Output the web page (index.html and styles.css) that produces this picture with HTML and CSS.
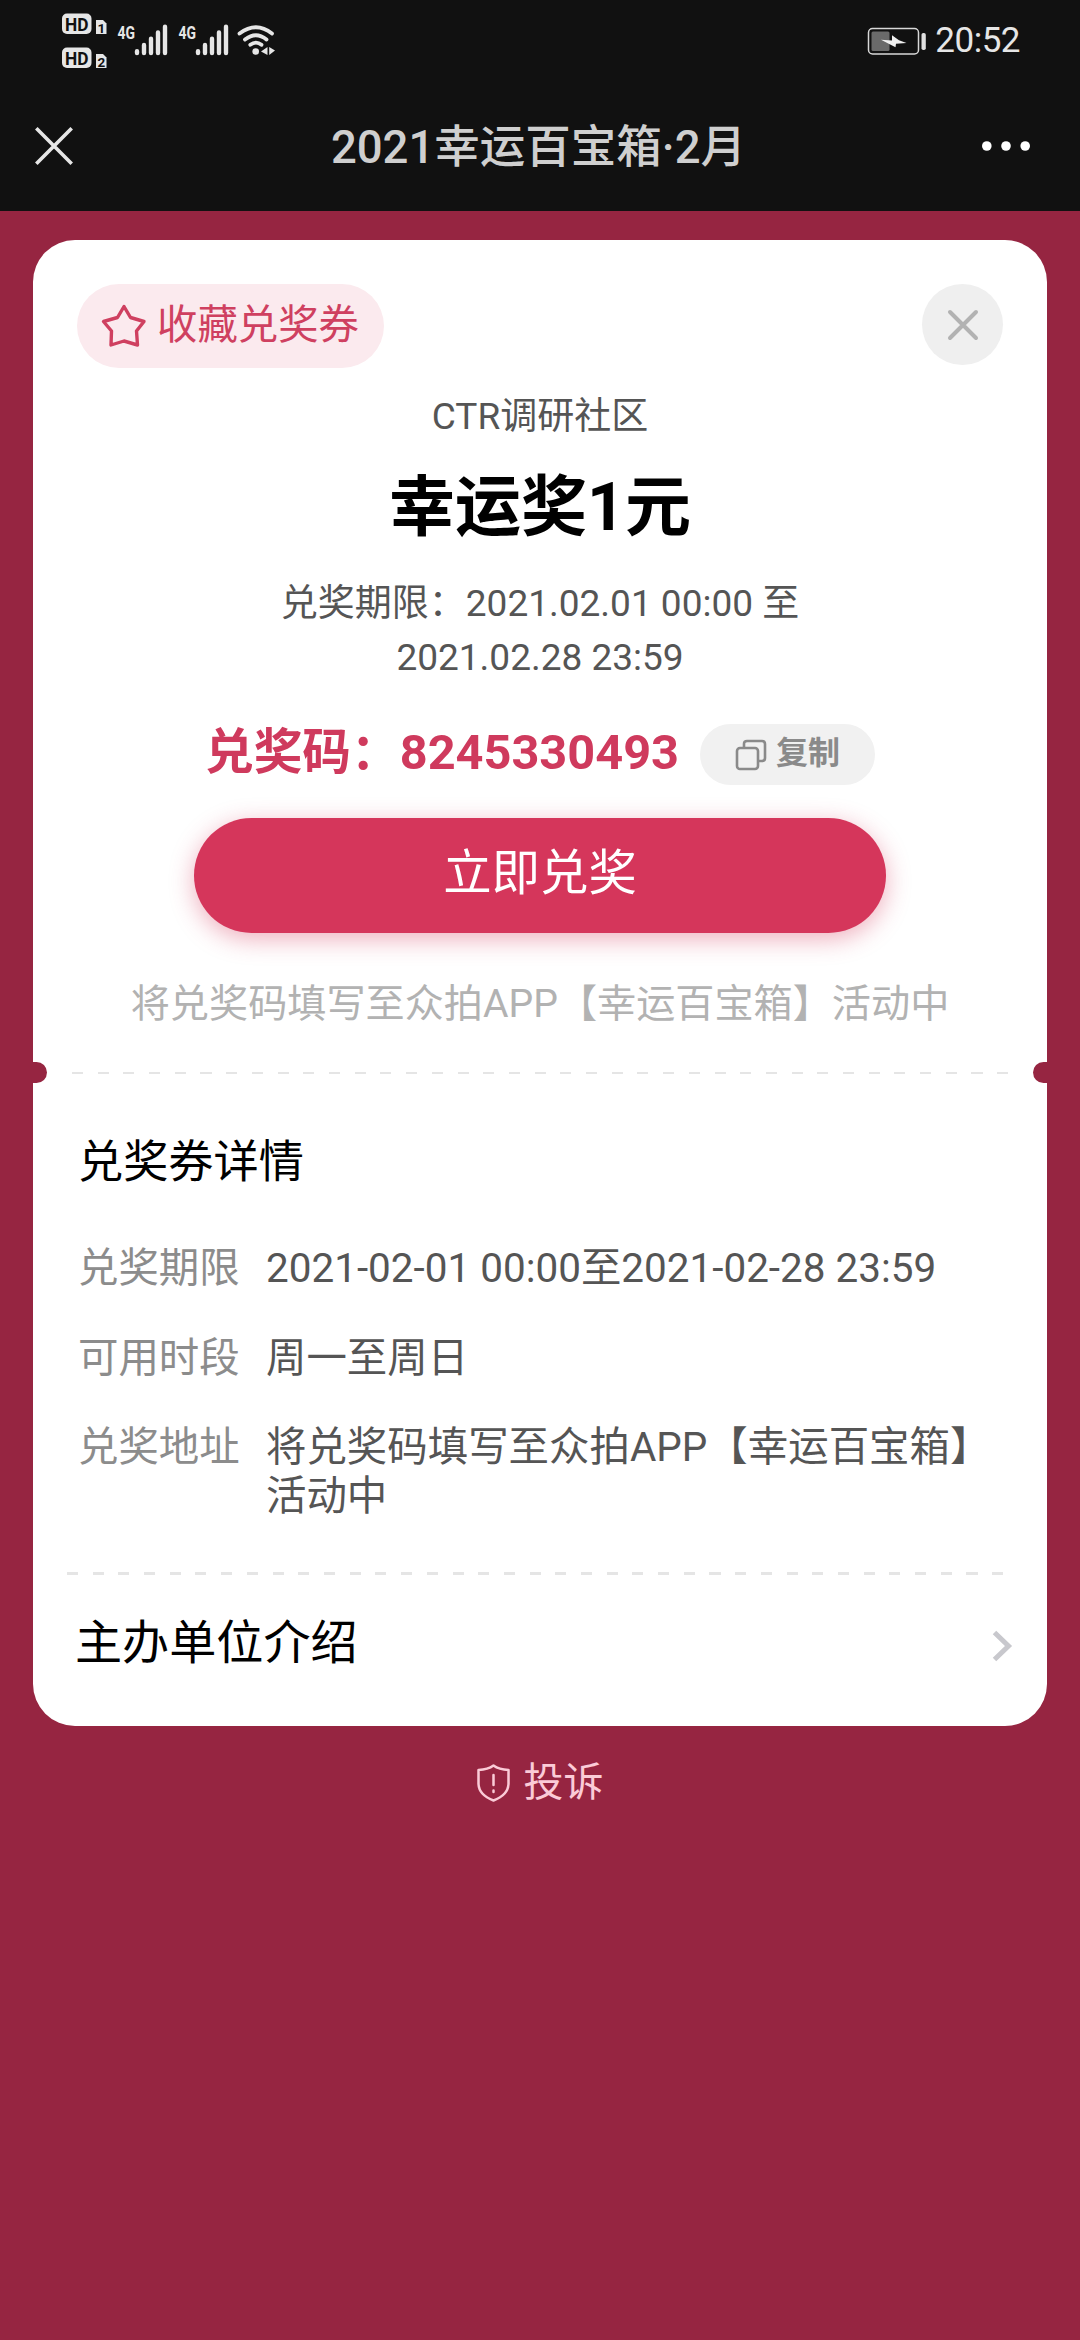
FILE: index.html
```html
<!DOCTYPE html>
<html lang="zh-CN">
<head>
<meta charset="utf-8">
<title>2021幸运百宝箱·2月</title>
<link rel="stylesheet" href="styles.css">
</head>
<body>
<header class="top">
  <div class="status">
    <svg class="status-left" width="240" height="81" viewBox="40 0 240 81">
      <g fill="#e6e6e6">
        <rect x="62" y="13.500" width="29.500" height="20.500" rx="5"/>
        <rect x="62" y="47.500" width="29.500" height="20.500" rx="5"/>
        <path d="M96 20h7l3.500 3.500V34H96z"/>
        <path d="M96 54h7l3.500 3.500V68H96z"/>
      </g>
      <g class="hd">
        <text x="65" y="30.500" textLength="23.500" lengthAdjust="spacingAndGlyphs">HD</text>
        <text x="65" y="64.500" textLength="23.500" lengthAdjust="spacingAndGlyphs">HD</text>
        <text class="sim" x="97.500" y="32.500">1</text>
        <text class="sim" x="97.500" y="66.500">2</text>
      </g>
      <g class="net">
        <text x="117.500" y="38.500" textLength="17.500" lengthAdjust="spacingAndGlyphs">4G</text>
        <text x="178.500" y="38.500" textLength="17.500" lengthAdjust="spacingAndGlyphs">4G</text>
      </g>
      <g stroke="#e6e6e6" stroke-width="4.400" stroke-linecap="round" fill="none">
        <path d="M137 51.200V53M144 45V53M151 38.700V53M158 32.500V53M165 26.700V53"/>
        <path d="M198 51.200V53M205 45V53M212 38.700V53M219 32.500V53M226 26.700V53"/>
        <path stroke-width="3.800" d="M239.500 33.500Q256 21 272 33.500M245 39.500Q256 31 266.500 39.500M250.300 44.800Q256 40.500 261.500 44.800"/>
      </g>
      <g fill="#e6e6e6">
        <circle cx="255.700" cy="51.500" r="3.300"/>
        <path d="M261 51.500L267.500 47v8zM269.200 47v8L275 50.500z"/>
      </g>
    </svg>
    <div class="status-right">
      <svg width="60" height="28" viewBox="866 26 60 28">
        <rect x="867.500" y="27.500" width="50" height="25.500" rx="4" fill="none" stroke="#d8d8d8" stroke-width="1.500"/>
        <rect x="870.500" y="30.500" width="18" height="19.500" rx="1.500" fill="#6a6a6a"/>
        <rect x="920.500" y="32" width="4.300" height="17" rx="1.800" fill="#e0e0e0"/>
        <path d="M880 38.700L891 39.500V34.300L898 39.300L905.500 42L895 42.800L894.500 46.300Z" fill="#f0f0f0"/>
      </svg>
      <span class="clock">20:52</span>
    </div>
  </div>
  <nav class="nav">
    <svg width="38" height="38" viewBox="0 0 38 38" fill="none" stroke="#e6e6e6" stroke-width="3.600"><path d="M1.300 1.300L36.700 36.700M36.700 1.300L1.300 36.700"/></svg>
    <h1 class="nav-title">2021幸运百宝箱·2月</h1>
    <svg width="48" height="10" viewBox="0 0 48 10" fill="#fff"><circle cx="4.800" cy="5" r="4.800"/><circle cx="24" cy="5" r="4.800"/><circle cx="43.200" cy="5" r="4.800"/></svg>
  </nav>
</header>
<main class="card">
  <div class="card-top">
    <button class="save">
      <svg width="46" height="44" viewBox="0 0 46 44" fill="none" stroke="#cf4060" stroke-width="3.400" stroke-linejoin="round"><path d="M23 2.500L29.500 13.500L43 17.500L35.500 27L36.500 41L23 37L10 41L10.500 27L2.500 17.500L16.500 13.500Z"/></svg>
      <span>收藏兑奖券</span>
    </button>
    <button class="close">
      <svg width="32" height="32" viewBox="0 0 32 32" fill="none" stroke="#b2b2b2" stroke-width="4" stroke-linecap="round"><path d="M3 3L29 29M29 3L3 29"/></svg>
    </button>
  </div>
  <p class="org">CTR调研社区</p>
  <h2 class="prize">幸运奖1元</h2>
  <p class="period">兑奖期限：2021.02.01 00:00 至<br>2021.02.28 23:59</p>
  <div class="code-row">
    <span class="code">兑奖码：8245330493</span>
    <button class="copy">
      <svg width="32" height="32" viewBox="0 0 32 32" fill="none" stroke="#8a8a8a" stroke-width="2.600"><rect x="2" y="9" width="21" height="21" rx="3"/><path d="M9 9V5q0-3 3-3h15q3 0 3 3v14q0 3-3 3h-4"/></svg>
      <span>复制</span>
    </button>
  </div>
  <button class="redeem">立即兑奖</button>
  <p class="hint">将兑奖码填写至众拍APP【幸运百宝箱】活动中</p>
  <div class="tear"><i class="notch notch-left"></i><i class="dashes"></i><i class="notch notch-right"></i></div>
  <section class="detail">
    <h3 class="detail-title">兑奖券详情</h3>
    <dl class="rows">
      <dt>兑奖期限</dt><dd>2021-02-01 00:00至2021-02-28 23:59</dd>
      <dt>可用时段</dt><dd>周一至周日</dd>
      <dt>兑奖地址</dt><dd>将兑奖码填写至众拍APP【幸运百宝箱】活动中</dd>
    </dl>
  </section>
  <div class="dashes dashes-inner"></div>
  <a class="host">
    <span>主办单位介绍</span>
    <svg width="22" height="32" viewBox="0 0 22 32" fill="none" stroke="#c8c8cd" stroke-width="5"><path d="M2.500 2.500L16.500 16L2.500 29.500"/></svg>
  </a>
</main>
<footer class="report">
  <svg width="33" height="38" viewBox="0 0 33 38" fill="none" stroke="#fbcbd7" stroke-width="2.500" stroke-linejoin="round" stroke-linecap="round"><path d="M16.500 1.500Q22 5.500 31.500 6V20Q31 31 16.500 36.500Q2 31 1.500 20V6Q11 5.500 16.500 1.500Z"/><path d="M16.500 11V21M16.500 26.500V28"/></svg>
  <span>投诉</span>
</footer>
</body>
</html>
```
FILE: styles.css
```css
* { box-sizing: border-box; margin: 0; padding: 0; }
body {
  width: 1080px;
  min-height: 2340px;
  background: #962541;
  color: #000;
  font-family: Roboto, "Noto Sans CJK SC", sans-serif;
  font-weight: 400;
}
button { border: 0; font: inherit; }
svg { display: block; flex: none; }
h1, h2, h3 { font-weight: 400; }

.top { height: 211px; background: #111; }
.status { height: 81px; display: flex; justify-content: space-between; padding: 0 60px 0 40px; }
.status-right { display: flex; align-items: center; gap: 8px; }
.clock { font-size: 35px; letter-spacing: -.5px; line-height: 40px; color: #e6e6e6; padding-top: 1px; }
.hd text { font-size: 18.500px; font-weight: 700; fill: #111; }
.hd .sim { font-size: 13.500px; }
.net text { font-size: 19px; font-weight: 700; fill: #e6e6e6; }
.nav { height: 130px; display: flex; align-items: center; justify-content: space-between; padding: 0 50px 0 35px; }
.nav-title { font-size: 45.500px; line-height: 60px; font-weight: 500; color: #cfcfcf; padding: 4px 0 0 22px; }

.card {
  width: 1014px;
  height: 1486px;
  margin: 29px auto 0;
  padding-top: 44px;
  border-radius: 42px;
  background: #fff;
  display: flex;
  flex-direction: column;
}
.card-top { height: 84px; padding: 0 44px; display: flex; justify-content: space-between; }
.save {
  width: 307px; height: 84px; border-radius: 42px; padding-left: 24px;
  display: flex; align-items: center; gap: 10px;
  background: #fbeaee; color: #cf4060; font-size: 40.400px; line-height: 50px;
}
.close { width: 81px; height: 81px; border-radius: 50%; background: #efefef; display: flex; align-items: center; justify-content: center; }
.org { margin-top: 24px; text-align: center; font-size: 37px; line-height: 50px; color: #555; }
.prize { margin-top: 26px; text-align: center; font-size: 66px; line-height: 80px; font-weight: 700; }
.period { margin-top: 29px; text-align: center; font-size: 37px; line-height: 54px; color: #555; }
.code-row { margin-top: 39px; height: 61px; display: flex; justify-content: center; align-items: center; gap: 21px; }
.code { font-size: 48.700px; line-height: 57px; padding-bottom: 4px; font-weight: 700; color: #cf3a5d; }
.copy {
  width: 175px; height: 61px; border-radius: 31px; background: #f1f1f1; color: #8a8a8a;
  display: flex; align-items: center; justify-content: center; gap: 9px;
  font-size: 32px; line-height: 56px; font-weight: 700;
}
.copy span { padding-bottom: 3px; }
.redeem {
  margin: 33px auto 0; width: 692px; height: 115px; border-radius: 58px;
  background: #d5365b; color: #fff; font-size: 48.400px; line-height: 110px; padding-bottom: 3px; text-align: center;
  box-shadow: 0 6px 24px rgba(213, 54, 91, .4);
}
.hint { margin-top: 46px; text-align: center; font-size: 39.150px; line-height: 50px; color: #b2b2b2; }
.tear { margin-top: 33px; height: 21px; display: flex; align-items: center; justify-content: space-between; }
.notch { width: 14px; height: 21px; background: #962541; }
.notch-left { border-radius: 0 11px 11px 0; }
.notch-right { border-radius: 11px 0 0 11px; }
.dashes { width: 937px; height: 2px; background: repeating-linear-gradient(90deg, #e5e5e5 0 11px, transparent 11px 25.700px); }
.detail { padding: 50px 40px 0 45px; }
.detail-title { font-size: 45.200px; line-height: 60px; }
.rows { margin-top: 51px; display: grid; grid-template-columns: 162px 1fr; column-gap: 26px; row-gap: 40.500px; font-size: 40.450px; line-height: 49px; }
.rows dt { color: #8c8c8c; }
.rows dd { color: #555; }
.dashes-inner { margin: 51px 0 0 34px; height: 3px; }
.host { height: 136px; padding: 0 33px 0 42px; display: flex; align-items: center; justify-content: space-between; font-size: 47.100px; line-height: 60px; }
.host svg { margin-top: 6px; }
.report { margin-top: 27px; height: 60px; display: flex; justify-content: center; align-items: center; gap: 14px; font-size: 40px; line-height: 60px; color: #fbcbd7; }
```
